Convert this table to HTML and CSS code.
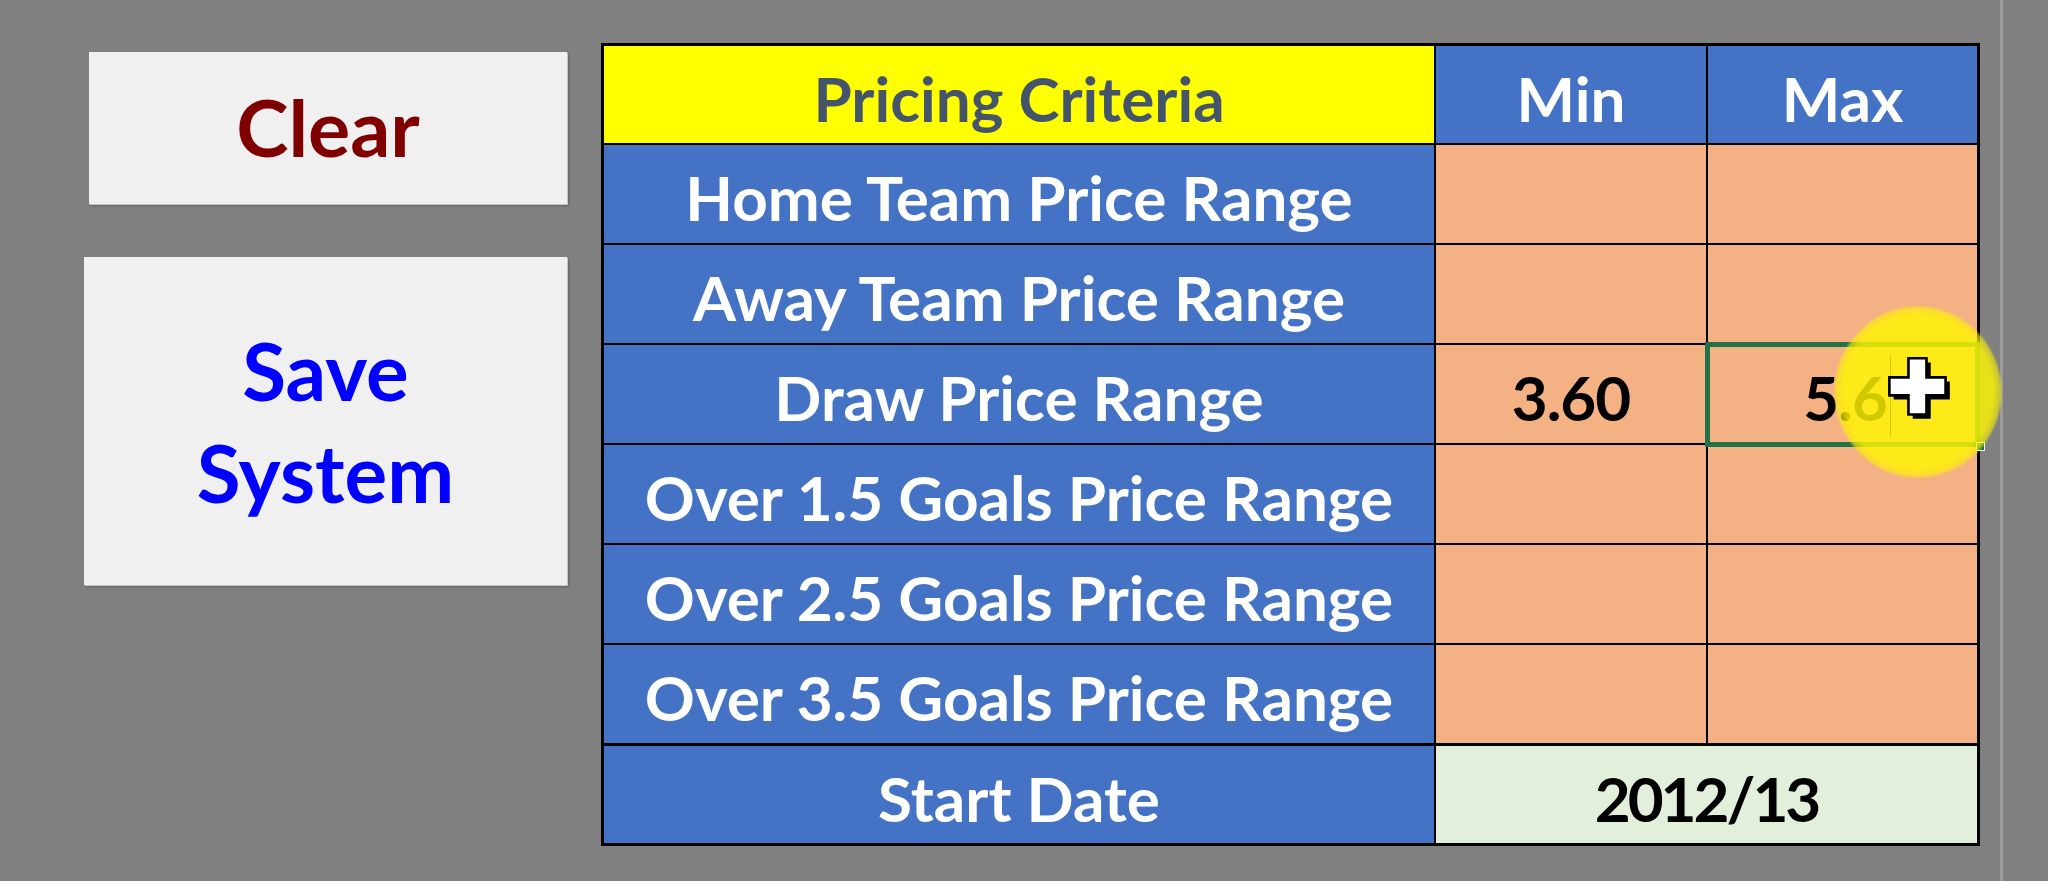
FILE: index.html
```html
<!DOCTYPE html>
<html>
<head>
<meta charset="utf-8">
<link rel="stylesheet" href="styles.css">
</head>
<body>
<div class="page">
  <div class="buttons">
    <div class="btn btn-clear"><span class="btn-text clear-text">Clear</span></div>
    <div class="btn btn-save"><span class="btn-text save-text">Save<br>System</span></div>
  </div>
  <div class="sheet">
    <div class="cell head-yellow">Pricing Criteria</div>
    <div class="cell head-blue">Min</div>
    <div class="cell head-blue">Max</div>

    <div class="cell label">Home Team Price Range</div>
    <div class="cell val"></div>
    <div class="cell val"></div>

    <div class="cell label">Away Team Price Range</div>
    <div class="cell val"></div>
    <div class="cell val"></div>

    <div class="cell label">Draw Price Range</div>
    <div class="cell val num">3.60</div>
    <div class="cell val selected">
      <span class="edit-text num">5.6</span>
      <span class="sel-border"></span>
      <span class="caret"></span>
      <span class="fill-handle"></span>
      <span class="spotlight"></span>
      <svg class="pointer" width="70" height="70" viewBox="0 0 66 66">
        <path d="M24 4h17v18h18v17H41v18H24V39H6V22h18z" fill="#000" transform="translate(4 4)"/>
        <path d="M24 4h17v18h18v17H41v18H24V39H6V22h18z" fill="#fff" stroke="#000" stroke-width="2.5"/>
      </svg>
    </div>

    <div class="cell label">Over 1.5 Goals Price Range</div>
    <div class="cell val"></div>
    <div class="cell val"></div>

    <div class="cell label">Over 2.5 Goals Price Range</div>
    <div class="cell val"></div>
    <div class="cell val"></div>

    <div class="cell label">Over 3.5 Goals Price Range</div>
    <div class="cell val"></div>
    <div class="cell val"></div>

    <div class="cell label last">Start Date</div>
    <div class="cell date last">2012/13</div>
  </div>
  <div class="divider"></div>
</div>
</body>
</html>
```

FILE: styles.css
```css
html, body {
  margin: 0;
  padding: 0;
  background: #808080;
  height: 100%;
  overflow: hidden;
}

.page {
  display: flex;
  align-items: flex-start;
  height: 881px;
  padding-left: 84px;
  box-sizing: border-box;
  font-family: "Lato", "Open Sans", sans-serif;
  font-weight: 700;
}

.buttons {
  display: flex;
  flex-direction: column;
  align-items: flex-end;
  gap: 53px;
  margin-top: 52px;
  width: 483px;
}

.btn {
  background: #f0f0f0;
  box-shadow: 1px 1px 0 #c4c4c4, 2px 2px 2px rgba(0, 0, 0, 0.25);
  display: flex;
  align-items: center;
  justify-content: center;
  text-align: center;
}

.btn-clear {
  width: 478px;
  height: 152px;
}

.btn-save {
  width: 483px;
  height: 328px;
}

.btn-text {
  line-height: 102px;
}

.clear-text {
  font-size: 79px;
  color: #800000;
  margin-top: -2px;
}

.save-text {
  font-size: 80px;
  color: #0000ff;
}

.sheet {
  margin-left: 34px;
  margin-top: 43px;
  display: grid;
  grid-template-columns: 830px 270px 269px;
  grid-template-rows: 97px repeat(7, 98px);
  gap: 2px;
  padding: 3px;
  background: #000;
}

.cell {
  display: flex;
  align-items: center;
  justify-content: center;
  font-size: 62px;
  white-space: nowrap;
  padding-top: 6px;
  box-sizing: border-box;
}

.num {
  letter-spacing: -1px;
}

.head-yellow {
  background: #ffff00;
  color: #44546a;
}

.head-blue {
  background: #4472c4;
  color: #ffffff;
}

.label {
  background: #4472c4;
  color: #ffffff;
}

.val {
  background: #f4b183;
  color: #000;
}

.date {
  grid-column: 2 / 4;
  background: #e2efda;
  color: #000;
  letter-spacing: -3px;
}

.last {
  margin-top: 1px;
}

.selected {
  position: relative;
  justify-content: flex-end;
  padding-right: 90px;
}

.sel-border {
  position: absolute;
  left: -3px;
  top: -3px;
  right: -3px;
  bottom: -4px;
  border: 5px solid #217346;
}

.fill-handle {
  position: absolute;
  right: -8px;
  bottom: -8px;
  width: 7px;
  height: 7px;
  background: #217346;
  border: 1px solid #f4f4f4;
}

.caret {
  position: absolute;
  left: 182px;
  top: 10px;
  width: 1px;
  height: 82px;
  background: #000;
}

.spotlight {
  position: absolute;
  left: 125px;
  top: -40px;
  width: 170px;
  height: 174px;
  border-radius: 50%;
  background: radial-gradient(closest-side, rgba(255, 246, 0, 0.82) 88%, rgba(255, 246, 0, 0.6) 96%, rgba(255, 246, 0, 0) 100%);
}

.pointer {
  position: absolute;
  left: 175px;
  top: 9px;
}

.divider {
  align-self: stretch;
  width: 3px;
  margin-left: 20px;
  background: #9c9c9c;
}
```
